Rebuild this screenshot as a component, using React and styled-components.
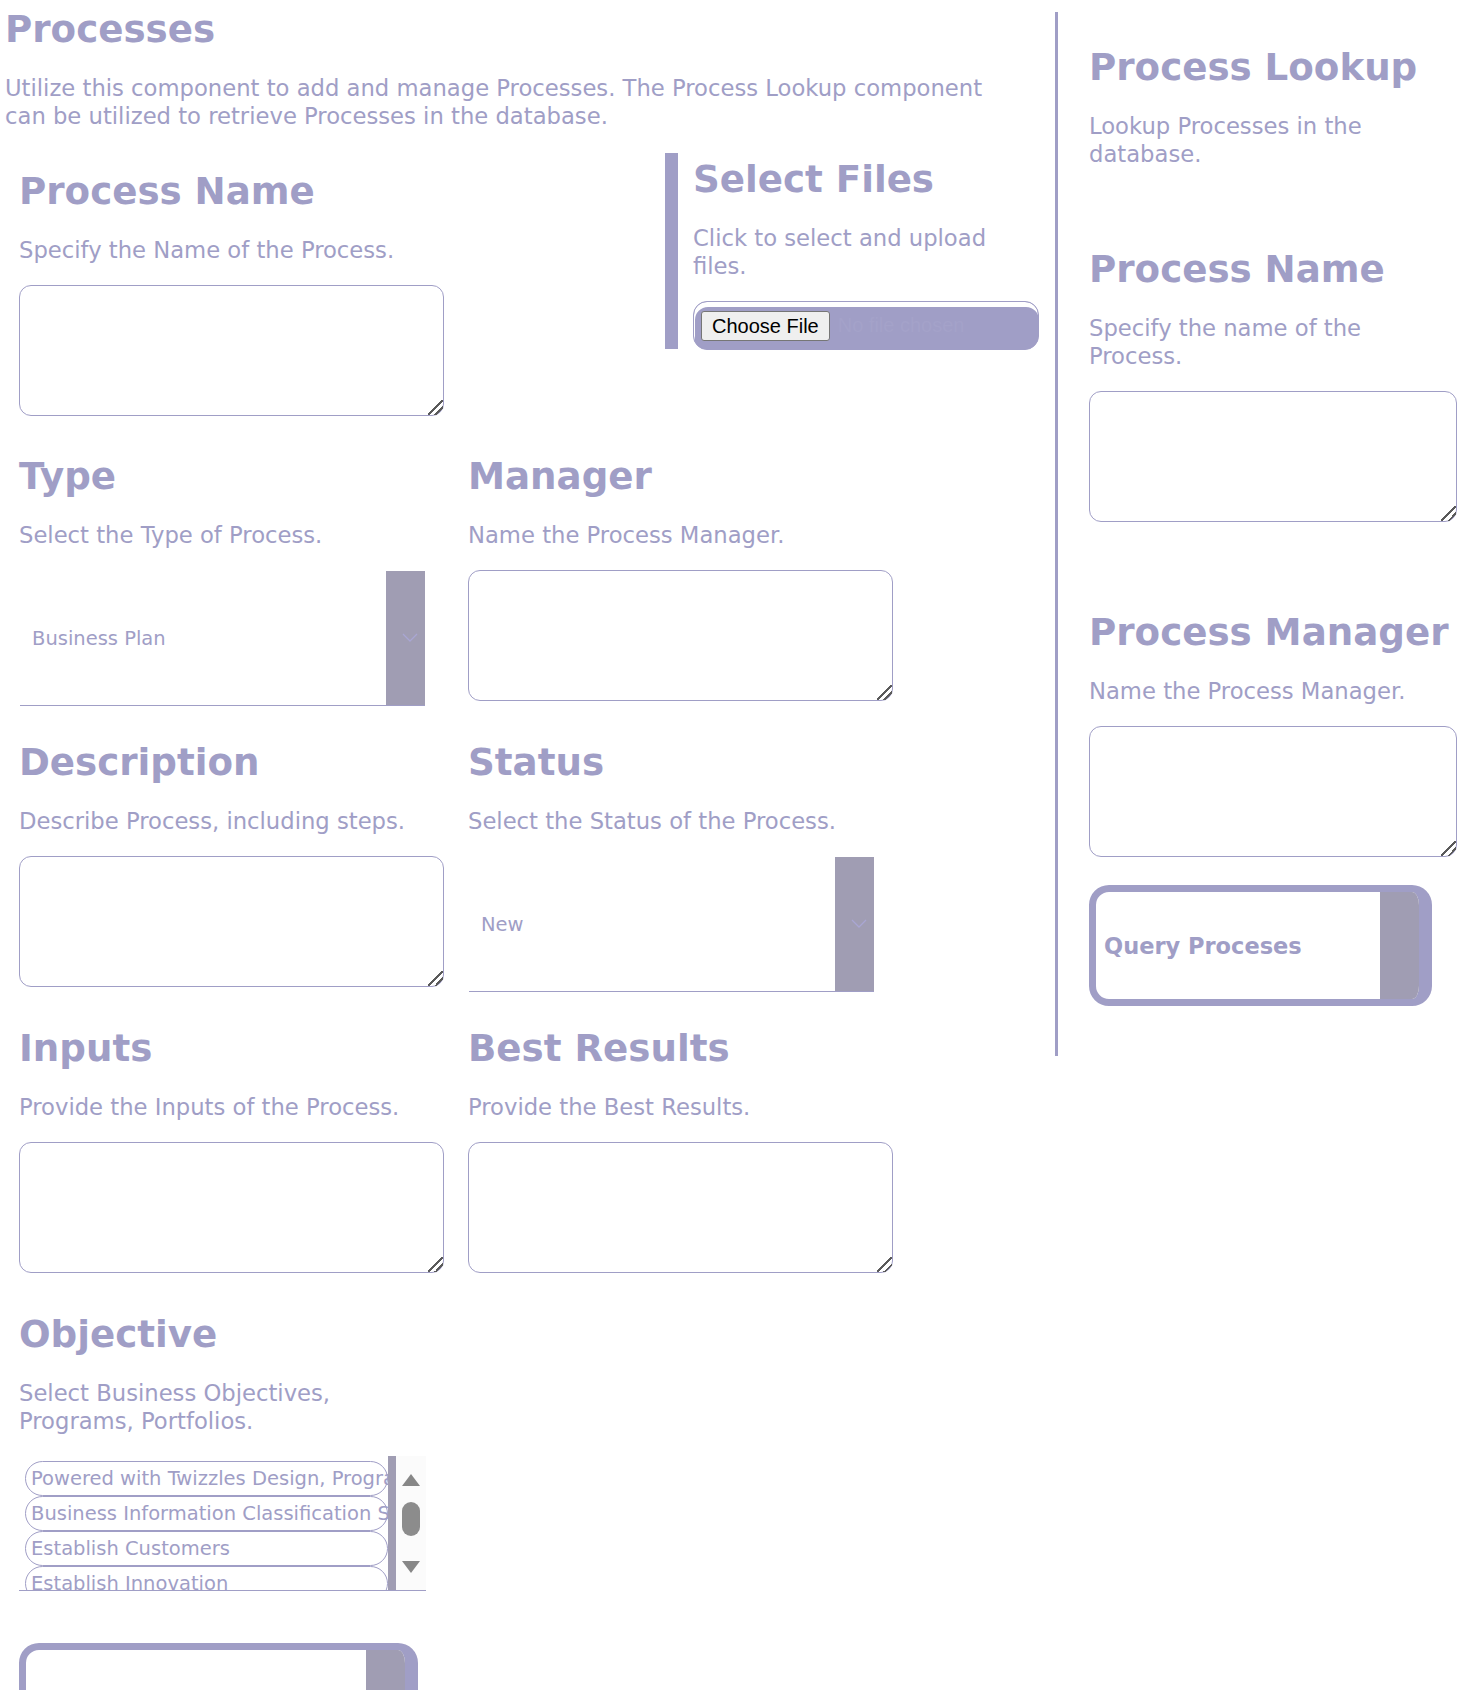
import React from "react";
import styled, { createGlobalStyle } from "styled-components";

const purple = "#a09ec6";
const grey = "#a09db3";

const GlobalStyle = createGlobalStyle`
  html, body {
    margin: 0;
    padding: 0;
    background: #fff;
  }
  body {
    font-family: "DejaVu Sans", Verdana, sans-serif;
    color: ${purple};
  }
  * {
    box-sizing: border-box;
  }
`;

const objectives = [
  "Powered with Twizzles Design, Programs, Portfolios",
  "Business Information Classification System",
  "Establish Customers",
  "Establish Innovation",
  "Establish Operations",
];

const App = () => {
  return (
    <Page>
      <GlobalStyle />
      <Main>
        <Title>Processes</Title>
        <Intro>
          Utilize this component to add and manage Processes. The Process Lookup component
          can be utilized to retrieve Processes in the database.
        </Intro>

        <FormTop>
          <Field $offset={16}>
            <Heading>Process Name</Heading>
            <Sub>Specify the Name of the Process.</Sub>
            <TextBox />
          </Field>
          <FilePanel>
            <Heading>Select Files</Heading>
            <Sub>Click to select and upload files.</Sub>
            <FileBox>
              <HiddenInput type="file" />
              <ChooseButton>Choose File</ChooseButton>
              <NoFile>No file chosen</NoFile>
            </FileBox>
          </FilePanel>
        </FormTop>

        <FormGrid>
          <Field>
            <Heading>Type</Heading>
            <Sub>Select the Type of Process.</Sub>
            <Dropdown value="Business Plan" options={["Business Plan", "Operations", "Support"]} />
          </Field>
          <Field>
            <Heading>Manager</Heading>
            <Sub>Name the Process Manager.</Sub>
            <TextBox />
          </Field>
          <Field>
            <Heading>Description</Heading>
            <Sub>Describe Process, including steps.</Sub>
            <TextBox />
          </Field>
          <Field>
            <Heading>Status</Heading>
            <Sub>Select the Status of the Process.</Sub>
            <Dropdown value="New" options={["New", "Active", "Retired"]} />
          </Field>
          <Field>
            <Heading>Inputs</Heading>
            <Sub>Provide the Inputs of the Process.</Sub>
            <TextBox />
          </Field>
          <Field>
            <Heading>Best Results</Heading>
            <Sub>Provide the Best Results.</Sub>
            <TextBox />
          </Field>
        </FormGrid>

        <ObjectiveField>
          <Heading>Objective</Heading>
          <Sub>Select Business Objectives, Programs, Portfolios.</Sub>
          <ListBox>
            <ListItems>
              {objectives.map((item) => (
                <Pill key={item}>{item}</Pill>
              ))}
            </ListItems>
            <ListEdge />
            <ScrollTrack>
              <ArrowUp />
              <Thumb />
              <ArrowDown />
            </ScrollTrack>
          </ListBox>
          <ActionButton $width={399}>
            <ActionLabel>Add Process</ActionLabel>
            <ActionSide />
          </ActionButton>
        </ObjectiveField>
      </Main>

      <LookupPanel>
        <Heading>Process Lookup</Heading>
        <Sub>Lookup Processes in the database.</Sub>

        <PanelSection $top={58}>
          <Heading>Process Name</Heading>
          <Sub>Specify the name of the Process.</Sub>
          <TextBox $narrow />
        </PanelSection>

        <PanelSection $top={88}>
          <Heading>Process Manager</Heading>
          <Sub>Name the Process Manager.</Sub>
          <TextBox $narrow />
        </PanelSection>

        <ActionButton $width={343} $top={28}>
          <ActionLabel>Query Proceses</ActionLabel>
          <ActionSide />
        </ActionButton>
      </LookupPanel>
    </Page>
  );
};

const Dropdown = ({ value, options }) => (
  <SelectWrap>
    <Select defaultValue={value}>
      {options.map((o) => (
        <option key={o}>{o}</option>
      ))}
    </Select>
    <ArrowBox>
      <svg width="16" height="10" viewBox="0 0 16 10">
        <polyline points="1,1 8,8 15,1" fill="none" stroke="#a9a6d3" strokeWidth="1.3" />
      </svg>
    </ArrowBox>
  </SelectWrap>
);

export default App;

const Page = styled.div`
  display: flex;
  align-items: flex-start;
  width: 1470px;
`;

const Main = styled.main`
  flex: none;
  width: 1055px;
  padding: 7px 0 0 5px;
`;

const Title = styled.h1`
  margin: 0;
  font-size: 37.2px;
  font-weight: bold;
  line-height: normal;
`;

const Intro = styled.p`
  margin: 23px 0 0;
  width: 1000px;
  font-size: 22.7px;
  line-height: 28px;
`;

const FormTop = styled.div`
  display: flex;
  align-items: flex-start;
  gap: 221px;
  margin: 23px 0 0 14px;
`;

const Field = styled.section`
  display: flex;
  flex-direction: column;
  width: 425px;
  padding-top: ${(p) => p.$offset || 0}px;
`;

const Heading = styled.h2`
  margin: 0 0 23px;
  font-size: 37.2px;
  font-weight: bold;
  line-height: normal;
`;

const Sub = styled.p`
  margin: 0 0 21px;
  font-size: 22.7px;
  line-height: 28px;
`;

const TextBox = styled.textarea`
  display: block;
  flex-shrink: 0;
  width: ${(p) => (p.$narrow ? 368 : 425)}px;
  height: 131px;
  border: 1px solid ${purple};
  border-radius: 12px;
  background: #fff;
  outline: none;
  font-family: "DejaVu Sans", Verdana, sans-serif;
  font-size: 19.5px;
  color: ${purple};

  &::-webkit-resizer {
    background: linear-gradient(
      135deg,
      transparent 0 46%,
      #5a5a5a 46% 54%,
      transparent 54% 70%,
      #5a5a5a 70% 78%,
      transparent 78%
    );
  }
`;

const FilePanel = styled.section`
  display: flex;
  flex-direction: column;
  width: 374px;
  height: 196px;
  padding: 4px 0 0 15px;
  border-left: 13px solid ${purple};
`;

const FileBox = styled.label`
  display: flex;
  align-items: center;
  flex-shrink: 0;
  width: 346px;
  height: 49px;
  padding-left: 7px;
  border: 1px solid ${purple};
  border-radius: 14px;
  background: ${purple};
  box-shadow: inset 1px 5px 0 #fff;
  font-family: "Liberation Sans", Arial, sans-serif;
  font-size: 20px;
  overflow: hidden;
`;

const HiddenInput = styled.input`
  display: none;
`;

const ChooseButton = styled.span`
  display: flex;
  align-items: center;
  height: 30px;
  padding: 0 10px;
  margin-top: 1px;
  border: 1px solid #767676;
  border-radius: 3px;
  background: #efefef;
  color: #000;
`;

const NoFile = styled.span`
  margin-left: 8px;
  color: #a4a2c9;
  white-space: nowrap;
`;

const FormGrid = styled.div`
  display: grid;
  grid-template-columns: 425px 425px;
  grid-auto-rows: 246px;
  column-gap: 24px;
  row-gap: 40px;
  margin: 38px 0 0 14px;
`;

const SelectWrap = styled.div`
  display: flex;
  flex-shrink: 0;
  width: 405px;
  height: 135px;
  margin: 1px 0 0 1px;
  border-bottom: 1px solid ${purple};
`;

const Select = styled.select`
  flex: 1;
  appearance: none;
  border: none;
  outline: none;
  background: #fff;
  padding: 0 0 0 12px;
  font-family: "DejaVu Sans", Verdana, sans-serif;
  font-size: 19.5px;
  color: ${purple};
`;

const ArrowBox = styled.div`
  display: flex;
  align-items: center;
  justify-content: center;
  width: 39px;
  padding-left: 9px;
  background: ${grey};
`;

const ObjectiveField = styled.section`
  display: flex;
  flex-direction: column;
  width: 425px;
  margin: 40px 0 0 14px;
`;

const ListBox = styled.div`
  display: flex;
  flex-shrink: 0;
  width: 407px;
  height: 135px;
  margin-top: 0;
  border-bottom: 1px solid ${purple};
`;

const ListItems = styled.div`
  flex: 1;
  overflow: hidden;
  padding: 5px 0 0 6px;
`;

const Pill = styled.div`
  width: 363px;
  height: 35px;
  padding-left: 5px;
  border: 1px solid ${purple};
  border-radius: 18px;
  font-size: 19.5px;
  line-height: 33px;
  white-space: nowrap;
`;

const ListEdge = styled.div`
  width: 8px;
  background: ${grey};
`;

const ScrollTrack = styled.div`
  display: flex;
  flex-direction: column;
  align-items: center;
  width: 30px;
  background: #fbfbfb;
`;

const ArrowUp = styled.div`
  margin-top: 18px;
  width: 0;
  height: 0;
  border-left: 9px solid transparent;
  border-right: 9px solid transparent;
  border-bottom: 12px solid #878787;
`;

const Thumb = styled.div`
  width: 18px;
  height: 34px;
  margin-top: 16px;
  border-radius: 9px;
  background: #8c8c8c;
`;

const ArrowDown = styled.div`
  margin-top: 25px;
  width: 0;
  height: 0;
  border-left: 9px solid transparent;
  border-right: 9px solid transparent;
  border-top: 12px solid #878787;
`;

const ActionButton = styled.button`
  display: flex;
  flex: none;
  width: ${(p) => p.$width}px;
  height: 121px;
  margin-top: ${(p) => (p.$top !== undefined ? p.$top : 52)}px;
  padding: 0;
  border: 7px solid ${purple};
  border-right-width: 13px;
  border-radius: 20px;
  background: #fff;
  overflow: hidden;
  cursor: pointer;
`;

const ActionLabel = styled.span`
  flex: 1;
  align-self: center;
  padding-left: 8px;
  text-align: left;
  font-family: "DejaVu Sans", Verdana, sans-serif;
  font-size: 22.5px;
  font-weight: bold;
  color: ${purple};
`;

const ActionSide = styled.span`
  width: 39px;
  background: ${grey};
`;

const LookupPanel = styled.aside`
  flex: none;
  display: flex;
  flex-direction: column;
  width: 415px;
  margin-top: 12px;
  padding: 33px 13px 50px 31px;
  border-left: 3px solid ${purple};
`;

const PanelSection = styled.section`
  display: flex;
  flex-direction: column;
  margin-top: ${(p) => p.$top}px;
`;
